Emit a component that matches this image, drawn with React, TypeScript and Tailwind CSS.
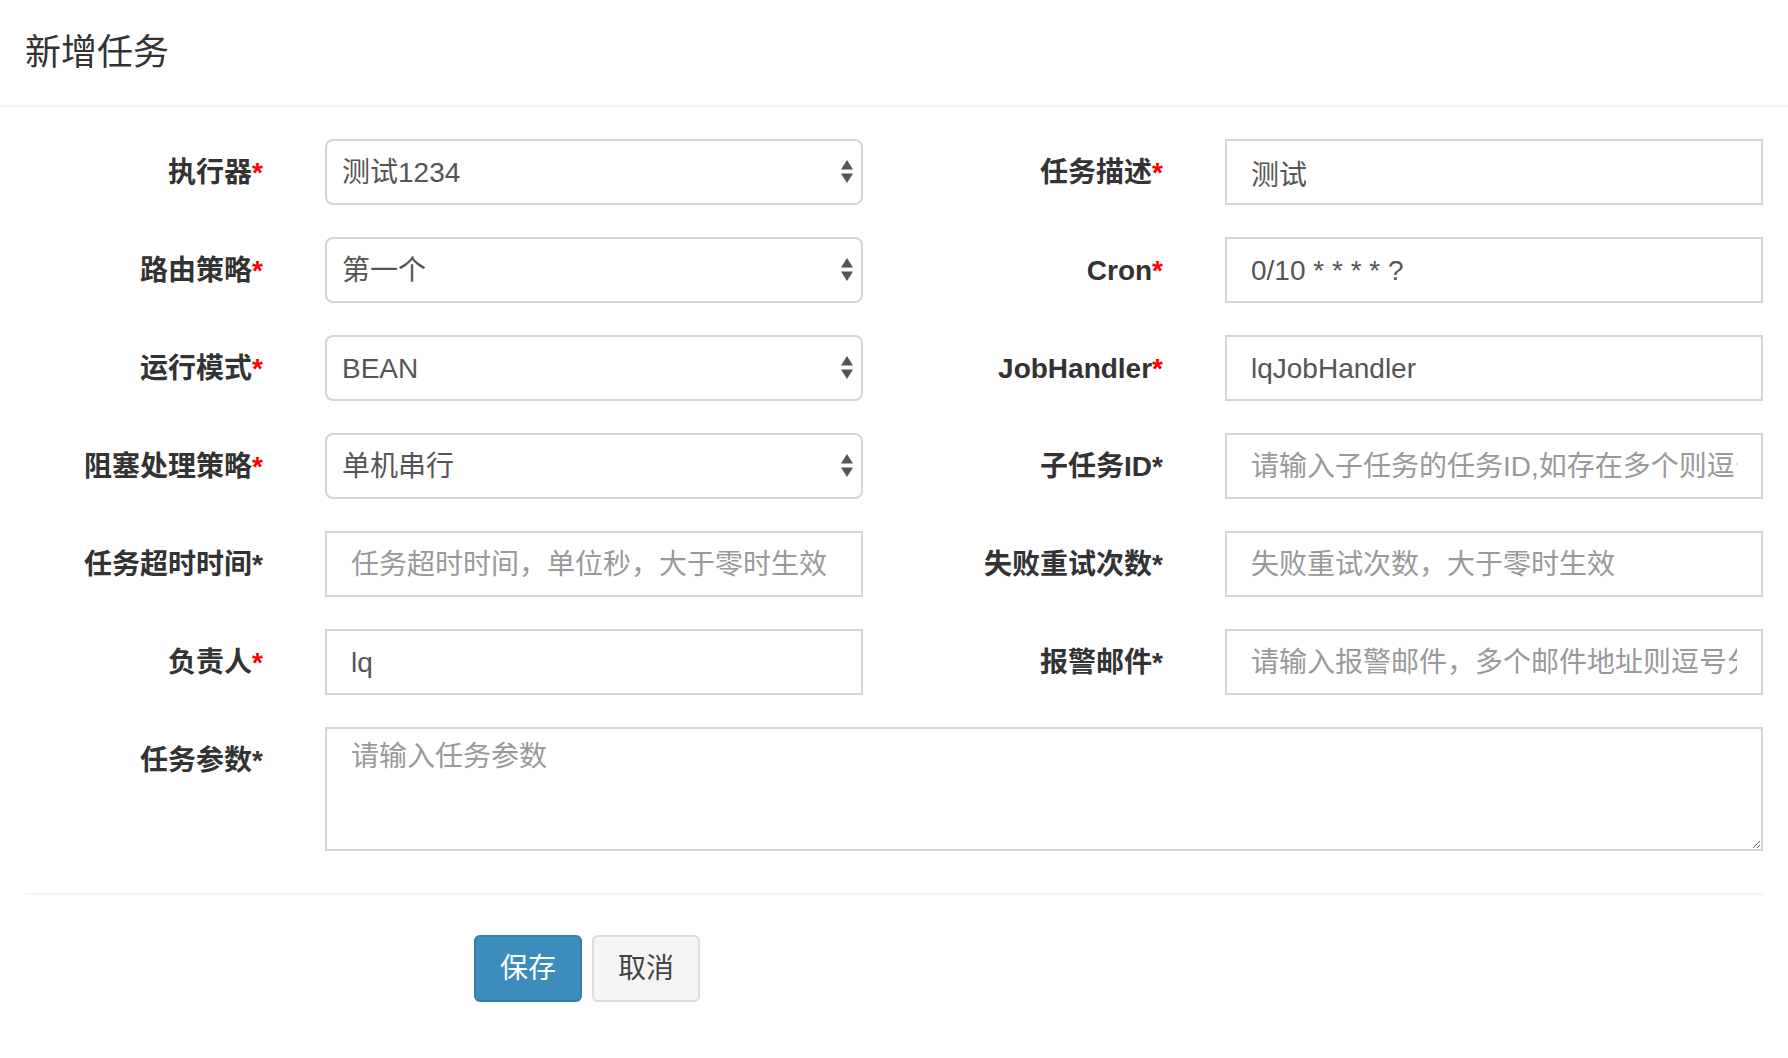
import { useState } from 'react';

type Field = {
  label: string;
  red: boolean;
  kind: 'select' | 'input';
  value?: string;
  placeholder?: string;
};

const ROWS: [Field, Field][] = [
  [
    { label: '执行器', red: true, kind: 'select', value: '测试1234' },
    { label: '任务描述', red: true, kind: 'input', value: '测试' },
  ],
  [
    { label: '路由策略', red: true, kind: 'select', value: '第一个' },
    { label: 'Cron', red: true, kind: 'input', value: '0/10 * * * * ?' },
  ],
  [
    { label: '运行模式', red: true, kind: 'select', value: 'BEAN' },
    { label: 'JobHandler', red: true, kind: 'input', value: 'lqJobHandler' },
  ],
  [
    { label: '阻塞处理策略', red: true, kind: 'select', value: '单机串行' },
    { label: '子任务ID', red: false, kind: 'input', placeholder: '请输入子任务的任务ID,如存在多个则逗号分隔' },
  ],
  [
    { label: '任务超时时间', red: false, kind: 'input', placeholder: '任务超时时间，单位秒，大于零时生效' },
    { label: '失败重试次数', red: false, kind: 'input', placeholder: '失败重试次数，大于零时生效' },
  ],
  [
    { label: '负责人', red: true, kind: 'input', value: 'lq' },
    { label: '报警邮件', red: false, kind: 'input', placeholder: '请输入报警邮件，多个邮件地址则逗号分隔' },
  ],
];

export default function App() {
  return (
    <div className="min-h-screen bg-white font-['Liberation_Sans','Noto_Sans_CJK_SC',sans-serif] text-[#333]">
      <div className="h-[107px] border-b-2 border-[#f4f4f4] px-[25px] pt-[27px]">
        <h4 className="text-[36px] leading-[52px] font-normal">新增任务</h4>
      </div>

      <form className="px-[25px] pt-[32px]" onSubmit={(e) => e.preventDefault()}>
        <div className="flex flex-col gap-[32px]">
          {ROWS.map(([l, r]) => (
            <div key={l.label} className="flex">
              <Label field={l} className="w-[238px]" />
              <div className="ml-[62px] w-[538px]">
                <Control field={l} />
              </div>
              <Label field={r} className="w-[300px]" />
              <div className="ml-[62px] w-[538px]">
                <Control field={r} />
              </div>
            </div>
          ))}
          <div className="flex">
            <Label field={{ label: '任务参数', red: false, kind: 'input' }} className="w-[238px]" />
            <textarea
              className="ml-[62px] h-[124px] w-[1438px] border-2 border-[#d2d6de] px-[24px] pt-[8px] text-[28px] leading-[40px] text-[#555] outline-none placeholder:text-[#999]"
              placeholder="请输入任务参数"
            />
          </div>
        </div>

        <div className="mt-[42px] border-t-2 border-[#f4f4f4]" />

        <div className="mt-[40px] ml-[449px] flex gap-[10px]">
          <button
            type="submit"
            className="h-[67px] rounded-[6px] border-2 border-[#367fa9] bg-[#3c8dbc] px-[24px] text-[28px] text-white"
          >
            保存
          </button>
          <button
            type="button"
            className="h-[67px] rounded-[6px] border-2 border-[#ddd] bg-[#f4f4f4] px-[24px] text-[28px] text-[#444]"
          >
            取消
          </button>
        </div>
      </form>
    </div>
  );
}

function Label({ field, className }: { field: Field; className: string }) {
  return (
    <label className={`flex h-[66px] items-center justify-end pt-[2px] text-[28px] font-bold text-[#333] ${className}`}>
      {field.label}
      <span className={field.red ? 'text-[#ff0000]' : 'text-[#333]'}>*</span>
    </label>
  );
}

function Control({ field }: { field: Field }) {
  const [val, setVal] = useState(field.value ?? '');
  if (field.kind === 'select') {
    return (
      <div className="relative">
        <select
          value={val}
          onChange={(e) => setVal(e.target.value)}
          className="h-[66px] w-full appearance-none rounded-[8px] border-2 border-[#d2d6de] bg-white pl-[15px] pr-[40px] pt-[2px] text-[28px] text-[#555] outline-none"
        >
          <option value={val}>{val}</option>
        </select>
        <svg
          className="pointer-events-none absolute right-[10px] top-1/2 -translate-y-1/2"
          width="12"
          height="24"
          viewBox="0 0 12 24"
          fill="#555"
        >
          <path d="M6 0 L12 9.5 L0 9.5 Z" />
          <path d="M0 13.5 L12 13.5 L6 23 Z" />
        </svg>
      </div>
    );
  }
  return (
    <input
      value={val}
      onChange={(e) => setVal(e.target.value)}
      placeholder={field.placeholder}
      className="h-[66px] w-full border-2 border-[#d2d6de] bg-white px-[24px] pt-[2px] text-[28px] text-[#555] outline-none placeholder:text-[#999]"
    />
  );
}
